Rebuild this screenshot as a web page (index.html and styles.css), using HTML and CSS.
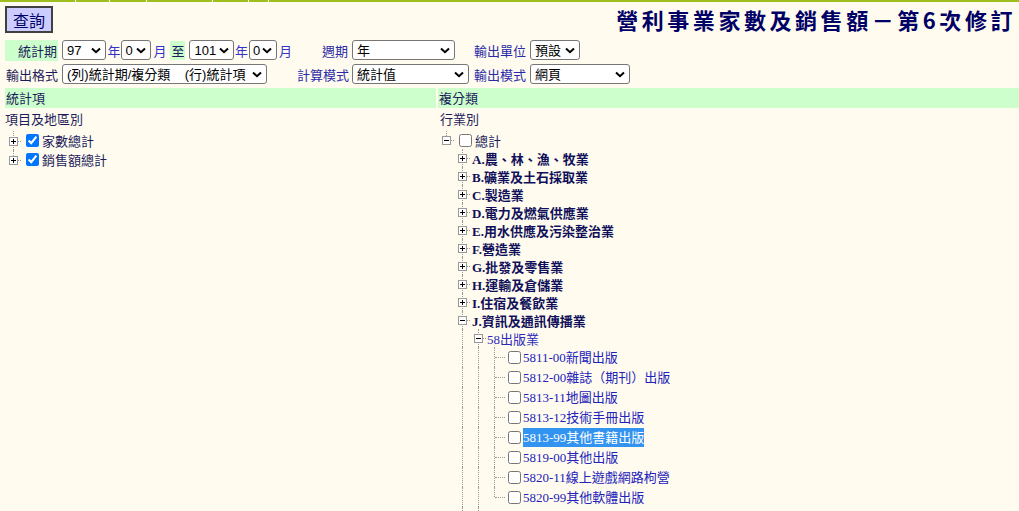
FILE: index.html
```html
<!DOCTYPE html>
<html lang="zh-Hant">
<head>
    <meta charset="UTF-8">
    <title>營利事業家數及銷售額</title>
    <link rel="stylesheet" href="styles.css">
</head>
<body>

<div class="topline"><span></span><span></span><span></span><span></span><span></span><span></span><span></span></div>

<div class="wrap">
    <div class="head">
        <button class="btn">查詢</button>
        <h1 class="title">營利事業家數及銷售額－第6次修訂</h1>
    </div>

    <!-- 查詢條件 -->
    <div class="opts">
        <div class="lbl hl">統計期</div>
        <div class="dates">
            <select class="s46"><option>97</option></select><span class="unit">年</span>
            <select class="s31"><option>0</option></select><span class="unit u2">月</span>
            <span class="to">至</span>
            <select class="s46"><option>101</option></select><span class="unit">年</span>
            <select class="s29"><option>0</option></select><span class="unit u2">月</span>
        </div>
        <div class="lbl">週期</div>
        <div><select class="s103"><option>年</option></select></div>
        <div class="lbl">輸出單位</div>
        <div><select class="s50"><option>預設</option></select></div>

        <div class="lbl dark">輸出格式</div>
        <div><select class="s205"><option>(列)統計期/複分類&nbsp;&nbsp;&nbsp;&nbsp;(行)統計項</option></select></div>
        <div class="lbl">計算模式</div>
        <div><select class="s117"><option>統計值</option></select></div>
        <div class="lbl">輸出模式</div>
        <div><select class="s100"><option>網頁</option></select></div>
    </div>

    <div class="panes">
        <div class="pane">
            <div class="band">統計項</div>
            <div class="sub">項目及地區別</div>
            <div class="tree">
                <div class="row c19">
                    <span class="ln t"><i class="box plus"></i></span>
                    <input type="checkbox" class="cb" checked>
                    <span class="item">家數總計</span>
                </div>
                <div class="row c19">
                    <span class="ln l"><i class="box plus"></i></span>
                    <input type="checkbox" class="cb" checked>
                    <span class="item">銷售額總計</span>
                </div>
            </div>
        </div>

        <div class="pane right">
            <div class="band">複分類</div>
            <div class="sub">行業別</div>
            <div class="tree">
                <div class="row">
                    <span class="ln l"><i class="box"></i></span>
                    <input type="checkbox" class="cb">
                    <span class="item">總計</span>
                </div>
                <div class="row"><span class="ln"></span><span class="ln t"><i class="box plus"></i></span><span class="cat">A.農、林、漁、牧業</span></div>
                <div class="row"><span class="ln"></span><span class="ln t"><i class="box plus"></i></span><span class="cat">B.礦業及土石採取業</span></div>
                <div class="row"><span class="ln"></span><span class="ln t"><i class="box plus"></i></span><span class="cat">C.製造業</span></div>
                <div class="row"><span class="ln"></span><span class="ln t"><i class="box plus"></i></span><span class="cat">D.電力及燃氣供應業</span></div>
                <div class="row"><span class="ln"></span><span class="ln t"><i class="box plus"></i></span><span class="cat">E.用水供應及污染整治業</span></div>
                <div class="row"><span class="ln"></span><span class="ln t"><i class="box plus"></i></span><span class="cat">F.營造業</span></div>
                <div class="row"><span class="ln"></span><span class="ln t"><i class="box plus"></i></span><span class="cat">G.批發及零售業</span></div>
                <div class="row"><span class="ln"></span><span class="ln t"><i class="box plus"></i></span><span class="cat">H.運輸及倉儲業</span></div>
                <div class="row"><span class="ln"></span><span class="ln t"><i class="box plus"></i></span><span class="cat">I.住宿及餐飲業</span></div>
                <div class="row"><span class="ln"></span><span class="ln t"><i class="box"></i></span><span class="cat">J.資訊及通訊傳播業</span></div>
                <div class="row"><span class="ln"></span><span class="ln i"></span><span class="ln t"><i class="box"></i></span><span class="grp">58出版業</span></div>

                <div class="row leaf"><span class="ln"></span><span class="ln i"></span><span class="ln i"></span><span class="ln t ext"></span><input type="checkbox" class="cb"><span class="code">5811-00新聞出版</span></div>
                <div class="row leaf"><span class="ln"></span><span class="ln i"></span><span class="ln i"></span><span class="ln t ext"></span><input type="checkbox" class="cb"><span class="code">5812-00雜誌（期刊）出版</span></div>
                <div class="row leaf"><span class="ln"></span><span class="ln i"></span><span class="ln i"></span><span class="ln t ext"></span><input type="checkbox" class="cb"><span class="code">5813-11地圖出版</span></div>
                <div class="row leaf"><span class="ln"></span><span class="ln i"></span><span class="ln i"></span><span class="ln t ext"></span><input type="checkbox" class="cb"><span class="code">5813-12技術手冊出版</span></div>
                <div class="row leaf"><span class="ln"></span><span class="ln i"></span><span class="ln i"></span><span class="ln t ext"></span><input type="checkbox" class="cb"><span class="code sel">5813-99其他書籍出版</span></div>
                <div class="row leaf"><span class="ln"></span><span class="ln i"></span><span class="ln i"></span><span class="ln t ext"></span><input type="checkbox" class="cb"><span class="code">5819-00其他出版</span></div>
                <div class="row leaf"><span class="ln"></span><span class="ln i"></span><span class="ln i"></span><span class="ln t ext"></span><input type="checkbox" class="cb"><span class="code">5820-11線上遊戲網路枸營</span></div>
                <div class="row leaf"><span class="ln"></span><span class="ln i"></span><span class="ln i"></span><span class="ln l ext"></span><input type="checkbox" class="cb"><span class="code">5820-99其他軟體出版</span></div>

                <!-- 後續節點的連接線 -->
                <div class="row"><span class="ln"></span><span class="ln i"></span><span class="ln i"></span></div>
            </div>
        </div>
    </div>
</div>

</body>
</html>
```

FILE: styles.css
```css
html {
    overflow: hidden;
}
body {
    margin: 0;
    background-color: #fffbee;
    font-family: "Noto Sans CJK TC", "Liberation Sans", sans-serif;
    font-size: 13px;
    color: #1c1c5c;
}
.topline {
    display: grid;
    grid-template-columns: 75px 33px 36px 65px 35px 19px 1fr;
    column-gap: 1px;
    height: 2px;
}
.topline span {
    background-color: #9fbf1f;
}
.wrap {
    padding-left: 5px;
}
.head {
    display: flex;
    justify-content: space-between;
    align-items: center;
    margin-top: 4px;
}
.btn {
    width: 48px;
    height: 27px;
    padding: 0;
    background-color: #ccccff;
    border: 2px solid #404040;
    color: #000066;
    font-family: "Noto Sans CJK TC", sans-serif;
    font-size: 16px;
    line-height: 20px;
}
.title {
    margin: 0;
    padding-right: 3px;
    font-size: 22px;
    font-weight: bold;
    line-height: 27px;
    letter-spacing: 3.55px;
    color: #000066;
}
.opts {
    display: grid;
    grid-template-columns: 53px 231px 51px 118px 52px auto;
    grid-auto-rows: 20px;
    column-gap: 4px;
    row-gap: 4px;
    margin-top: 7px;
    align-items: center;
}
.lbl {
    text-align: right;
    white-space: nowrap;
    color: #2a2aa8;
}
.lbl.hl {
    background-color: #ccffcc;
    color: #1c1c5c;
    line-height: 21px;
    padding-right: 1px;
}
.lbl.dark {
    color: #1c1c5c;
}
.dates {
    display: flex;
    align-items: center;
}
.unit {
    color: #3333cc;
    margin: 0 1px;
}
.unit.u2 {
    margin-left: 2px;
}
.to {
    background-color: #ccffcc;
    margin: 0 4px 0 3px;
    padding: 0 1px;
}
select {
    -webkit-appearance: none;
    appearance: none;
    display: block;
    height: 20px;
    padding: 0 0 0 4px;
    font-family: "Liberation Sans", "Noto Sans CJK TC", sans-serif;
    font-size: 13px;
    color: #000;
    background-color: #fff;
    background-image: url("data:image/svg+xml,%3Csvg xmlns='http://www.w3.org/2000/svg' width='10' height='7' viewBox='0 0 10 7'%3E%3Cpath d='M1 1.5 L5 5.2 L9 1.5' fill='none' stroke='%23000' stroke-width='2'/%3E%3C/svg%3E");
    background-repeat: no-repeat;
    background-position: right 4px center;
    border: 1px solid #767676;
    border-radius: 3px;
}
.s29 { width: 29px; padding-left: 3px; }
.s31 { width: 31px; padding-left: 3px; }
.s46 { width: 46px; }
.s50 { width: 50px; }
.s100 { width: 100px; }
.s103 { width: 103px; }
.s117 { width: 117px; }
.s205 { width: 205px; }

.panes {
    display: grid;
    grid-template-columns: 431px 1fr;
    column-gap: 2px;
    margin-top: 4px;
}
.band {
    height: 20px;
    line-height: 20px;
    padding-left: 1px;
    background-color: #ccffcc;
    color: #1c1c5c;
}
.sub {
    margin-top: 2px;
    line-height: 18px;
    color: #1c1c5c;
}
.right .sub {
    padding-left: 2px;
}
.tree {
    margin-top: 3px;
}
.row {
    display: flex;
    align-items: center;
    height: 18px;
    white-space: nowrap;
}
.row.c19 {
    height: 19px;
}
.row.leaf {
    height: 20px;
}

/* tree connector lines */
.ln {
    position: relative;
    flex: none;
    width: 16px;
    align-self: stretch;
}
.ln.i::before,
.ln.t::before,
.ln.l::before {
    content: '';
    position: absolute;
    left: 8px;
    top: 0;
    bottom: 0;
    border-left: 1px dotted #999;
}
.ln.l::before {
    bottom: 50%;
}
.ln.t::after,
.ln.l::after {
    content: '';
    position: absolute;
    left: 9px;
    right: 0;
    top: 50%;
    border-top: 1px dotted #999;
}
.ln.ext::after {
    right: -3px;
}
.box {
    position: absolute;
    left: 4px;
    top: calc(50% - 4px);
    width: 7px;
    height: 7px;
    border: 1px solid #999;
    background-color: #fff;
    z-index: 1;
}
.box::before {
    content: '';
    position: absolute;
    left: 1px;
    top: 3px;
    width: 5px;
    height: 1px;
    background-color: #000;
}
.box.plus::after {
    content: '';
    position: absolute;
    left: 3px;
    top: 1px;
    width: 1px;
    height: 5px;
    background-color: #000;
}

.cb {
    flex: none;
    width: 13px;
    height: 13px;
    margin: 0 3px 0 5px;
}
.leaf .cb {
    margin: 0 2px 0 6px;
}
.item {
    color: #1c1c5c;
}
.cat {
    margin-left: 2px;
    font-family: "Liberation Serif", "Noto Sans CJK TC", serif;
    font-weight: bold;
    color: #10105a;
}
.grp {
    margin-left: 1px;
    font-family: "Liberation Serif", "Noto Sans CJK TC", serif;
    color: #2a2ab8;
}
.code {
    font-family: "Liberation Serif", "Noto Sans CJK TC", serif;
    color: #2222bb;
    line-height: 19px;
}
.code.sel {
    background-color: #3393f0;
    color: #fff;
}
```
